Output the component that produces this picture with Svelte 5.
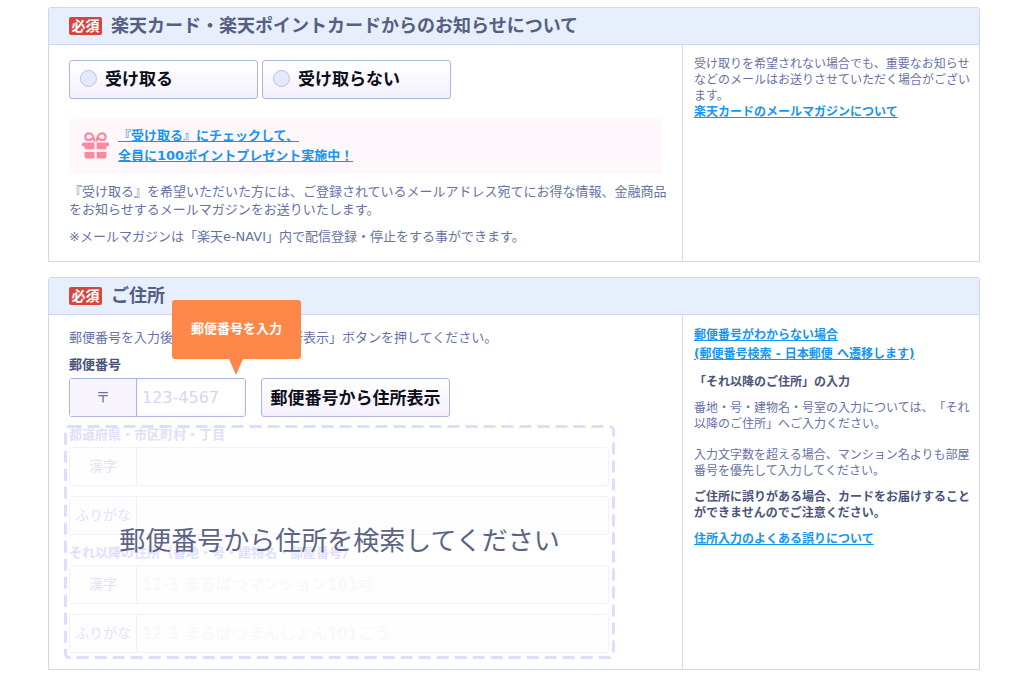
<script>
  let notice = $state('');
  let postal = $state('');

  const groups = [
    {
      title: '都道府県・市区町村・丁目',
      fields: [
        { id: 'city-kanji', label: '漢字', placeholder: '' },
        { id: 'city-kana', label: 'ふりがな', placeholder: '' }
      ]
    },
    {
      title: 'それ以降の住所（番地・号・建物名・部屋番号）',
      fields: [
        { id: 'rest-kanji', label: '漢字', placeholder: '12-3 まるばつマンション101号' },
        { id: 'rest-kana', label: 'ふりがな', placeholder: '12-3 まるばつまんしょん101ごう' }
      ]
    }
  ];
</script>

<main>
  <section>
    <header>
      <span class="badge">必須</span>
      <h2>楽天カード・楽天ポイントカードからのお知らせについて</h2>
    </header>
    <div class="body">
      <div class="content">
        <div class="options">
          <label class="option"><input type="radio" name="notice" value="yes" bind:group={notice} />受け取る</label>
          <label class="option"><input type="radio" name="notice" value="no" bind:group={notice} />受け取らない</label>
        </div>
        <div class="campaign">
          <svg width="27" height="27" viewBox="0 0 27 27" aria-hidden="true">
            <g fill="none" stroke="#fc8a9f" stroke-width="2.2">
              <path d="M12.4 9.6C12.2 5 10.2 1.4 7 1.4C4.6 1.4 3.4 3.1 3.4 4.9C3.4 6.8 4.8 8 6.5 8C9 8 10.8 6.4 11.8 4.4" />
              <path d="M14.6 9.6C14.8 5 16.8 1.4 20 1.4C22.4 1.4 23.6 3.1 23.6 4.9C23.6 6.8 22.2 8 20.5 8C18 8 16.2 6.4 15.2 4.4" />
            </g>
            <g fill="#fc8a9f">
              <path d="M1.5 10.5H12.4V17.3H3.8Q2.6 17.3 2.6 16V14.4H1.5Q0 14.4 0 13V12Q0 10.5 1.5 10.5Z" />
              <path d="M25.5 10.5H14.6V17.3H23.2Q24.4 17.3 24.4 16V14.4H25.5Q27 14.4 27 13V12Q27 10.5 25.5 10.5Z" />
              <path d="M2.6 20H12.4V26.4H4.6Q2.6 26.4 2.6 24.4Z" />
              <path d="M24.4 20H14.6V26.4H22.4Q24.4 26.4 24.4 24.4Z" />
            </g>
          </svg>
          <a href="#campaign">『受け取る』にチェックして、<br />全員に100ポイントプレゼント実施中！</a>
        </div>
        <p class="lead">『受け取る』を希望いただいた方には、ご登録されているメールアドレス宛てにお得な情報、金融商品<br />をお知らせするメールマガジンをお送りいたします。</p>
        <p class="lead">※メールマガジンは「楽天e-NAVI」内で配信登録・停止をする事ができます。</p>
      </div>
      <aside>
        <p>受け取りを希望されない場合でも、重要なお知らせなどのメールはお送りさせていただく場合がございます。<br /><a href="#magazine">楽天カードのメールマガジンについて</a></p>
      </aside>
    </div>
  </section>

  <section>
    <header>
      <span class="badge">必須</span>
      <h2>ご住所</h2>
    </header>
    <div class="body">
      <div class="content address">
        <p class="lead">郵便番号を入力後、「郵便番号から住所表示」ボタンを押してください。</p>
        <label class="title" for="postal">郵便番号</label>
        <div class="postal-row">
          <div class="field postal">
            <span class="prefix">〒</span>
            <input id="postal" type="text" placeholder="123-4567" bind:value={postal} />
            <div class="tip" role="tooltip">郵便番号を入力</div>
          </div>
          <button type="button">郵便番号から住所表示</button>
        </div>
        <div class="lookup">
          <div class="faded">
            {#each groups as group}
              <div class="group">
                <div class="title">{group.title}</div>
                {#each group.fields as f}
                  <div class="field">
                    <label class="prefix" for={f.id}>{f.label}</label>
                    <input id={f.id} type="text" placeholder={f.placeholder} />
                  </div>
                {/each}
              </div>
            {/each}
          </div>
          <div class="cover">
            <svg aria-hidden="true"><rect x="1.5" y="1.5" rx="4" /></svg>
            <span>郵便番号から住所を検索してください</span>
          </div>
        </div>
      </div>
      <aside>
        <p class="links"><a href="#unknown">郵便番号がわからない場合<br />(郵便番号検索 - 日本郵便 へ遷移します)</a></p>
        <h3>「それ以降のご住所」の入力</h3>
        <p>番地・号・建物名・号室の入力については、「それ以降のご住所」へご入力ください。</p>
        <p class="spaced">入力文字数を超える場合、マンション名よりも部屋番号を優先して入力してください。</p>
        <p class="strong">ご住所に誤りがある場合、カードをお届けすることができませんのでご注意ください。</p>
        <p><a href="#mistakes">住所入力のよくある誤りについて</a></p>
      </aside>
    </div>
  </section>
</main>

<style>
  :global(body) {
    background: #fff;
  }
  main, main * {
    box-sizing: border-box;
  }
  main {
    display: flex;
    flex-direction: column;
    gap: 15px;
    padding: 7px 44px 6px 48px;
    color: #6872a3;
    font-family: "DejaVu Sans", "Noto Sans CJK JP", sans-serif;
    font-size: 13px;
    line-height: 18px;
    text-spacing-trim: space-all;
  }
  section {
    border: 1px solid #ced6f2;
    border-radius: 3px 3px 0 0;
  }
  header {
    display: flex;
    align-items: center;
    gap: 9px;
    height: 37px;
    padding: 0 20px;
    background: #e7eefc;
    border-bottom: 1px solid #ced6f2;
  }
  .badge {
    width: 33px;
    height: 18px;
    border-radius: 2px;
    background: #d9443f;
    color: #fff;
    font-size: 14px;
    font-weight: 700;
    text-align: center;
  }
  h2, h3, p {
    margin: 0;
  }
  h2 {
    color: #565f82;
    font-size: 18px;
    font-weight: 700;
    line-height: 36px;
  }
  .body {
    display: grid;
    grid-template-columns: minmax(0, 1fr) 297px;
  }
  .content {
    padding: 15px 20px;
  }
  .options {
    display: flex;
    gap: 4px;
    margin-bottom: 20px;
  }
  .option, button {
    width: 189px;
    height: 39px;
    border: 1px solid #adb5dc;
    border-radius: 3px;
    background: linear-gradient(#fff, #f4f0fc);
    color: #0c0e1a;
    font-family: inherit;
    font-size: 17px;
    font-weight: 700;
  }
  .option {
    display: flex;
    align-items: center;
    gap: 8px;
    padding: 0 10px 2px;
  }
  .option input {
    appearance: none;
    width: 17px;
    height: 17px;
    margin: 0;
    border: 1px solid #b9c0e6;
    border-radius: 50%;
    background: #e6e9fc;
  }
  .option input:checked {
    background: #5c6bc0;
    box-shadow: inset 0 0 0 4px #e6e9fc;
  }
  .campaign {
    display: flex;
    align-items: center;
    gap: 9px;
    height: 55px;
    padding: 0 13px 2px;
    background: #fef7fc;
    line-height: 20px;
  }
  a {
    color: #1696f2;
    font-weight: 700;
    text-decoration: underline;
  }
  .lead {
    white-space: nowrap;
  }
  .campaign ~ .lead {
    margin-top: 9px;
  }
  aside {
    padding: 11px 8px 11px 11px;
    border-left: 1px solid #d5daf5;
    font-size: 12px;
    line-height: 16px;
  }
  .links {
    line-height: 19px;
  }
  h3, .strong {
    color: #4b5478;
    font-size: 12px;
    font-weight: 700;
  }
  aside > * + * {
    margin-top: 10px;
  }
  aside > .spaced {
    margin-top: 15px;
  }
  .address {
    padding: 14px 20px 10px;
  }
  .title {
    display: block;
    color: #4b5478;
    font-weight: 700;
  }
  label.title {
    margin: 9px 0 4px;
  }
  .postal-row {
    display: flex;
    gap: 15px;
  }
  .field {
    display: flex;
    height: 39px;
    border: 1px solid #adb5dc;
    border-radius: 3px;
  }
  .postal {
    position: relative;
    width: 177px;
  }
  .prefix {
    flex: none;
    width: 67px;
    border-right: 1px solid #adb5dc;
    background: #f8f5fe;
    font-size: 14px;
    line-height: 36px;
    text-align: center;
  }
  .field input {
    flex: 1;
    min-width: 0;
    padding: 0 5px;
    border: 0;
    border-radius: 0 3px 3px 0;
    background: #fff;
    box-shadow: inset 0 0 6px #f0effc;
    color: #4b5478;
    font: inherit;
    font-size: 16px;
  }
  .field input::placeholder {
    color: #d3d7f5;
    opacity: 1;
  }
  button {
    padding: 0 0 2px;
  }
  .tip {
    position: absolute;
    left: 102px;
    bottom: 57px;
    width: 129px;
    height: 59px;
    border-radius: 3px;
    background: #fd8748;
    color: #fff;
    font-weight: 700;
    line-height: 57px;
    text-align: center;
  }
  .tip::after {
    content: "";
    position: absolute;
    top: 100%;
    left: 57px;
    border: 7px solid transparent;
    border-top: 16px solid #fd8748;
    border-bottom: 0;
  }
  .lookup {
    position: relative;
    max-width: 551px;
    margin: 8px 0 0 -5px;
    padding: 1px 6px 6px 5px;
  }
  .group + .group {
    margin-top: 9px;
  }
  .faded .title {
    margin-bottom: 3px;
    color: #e0e0fb;
  }
  .faded .field {
    border-color: #f1f0fd;
  }
  .faded .field + .field {
    margin-top: 10px;
  }
  .faded .prefix {
    border-color: #f1f0fd;
    background: #fefeff;
    color: #e2e2fb;
  }
  .faded input {
    background: #fefeff;
    box-shadow: none;
  }
  .faded input::placeholder {
    color: #f6f6fe;
  }
  .cover {
    position: absolute;
    inset: 0;
    display: flex;
    align-items: center;
    justify-content: center;
    padding-bottom: 3px;
    color: #5c6484;
    font-size: 26px;
    line-height: 36px;
  }
  .cover svg {
    position: absolute;
    inset: 0;
    width: 100%;
    height: 100%;
  }
  .cover rect {
    width: calc(100% - 3px);
    height: calc(100% - 3px);
    fill: none;
    stroke: #dcdffb;
    stroke-width: 3px;
    stroke-dasharray: 12 6;
  }
</style>
